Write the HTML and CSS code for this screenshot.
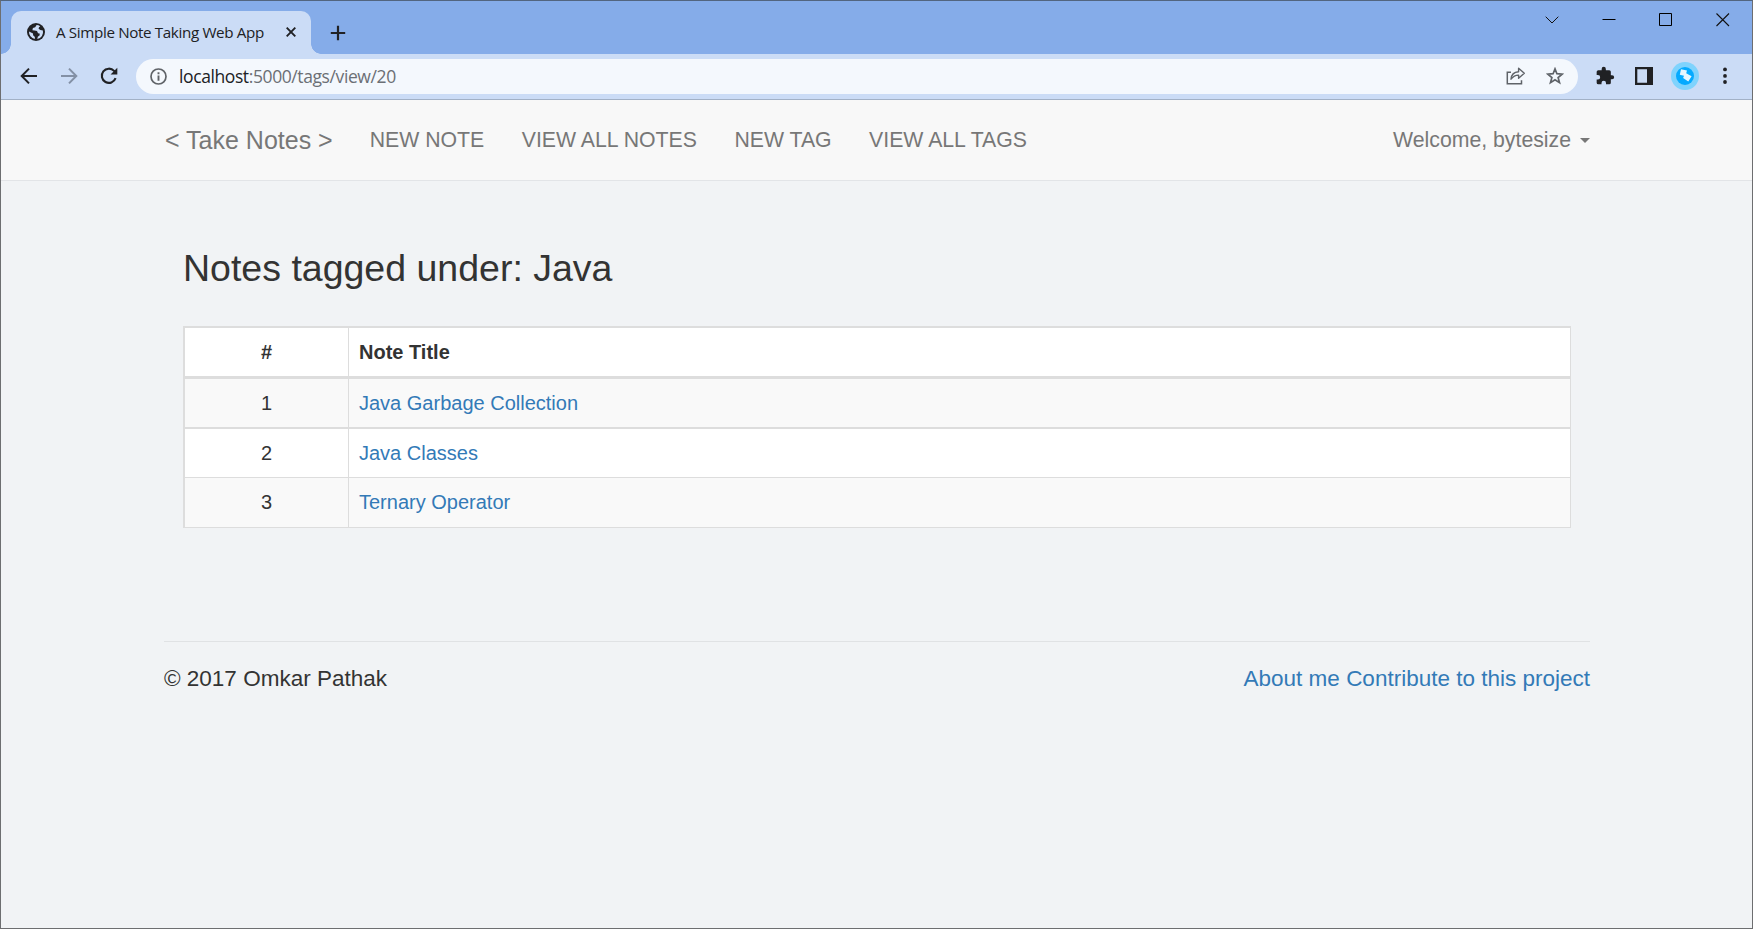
FILE: index.html
```html
<!DOCTYPE html>
<html lang="en">
<head>
<meta charset="utf-8">
<title>A Simple Note Taking Web App</title>
<link rel="stylesheet" href="styles.css">
</head>
<body>
<div class="window">
  <header class="titlebar">
    <div class="tab">
      <svg class="favicon" width="18" height="18" viewBox="0 0 18 18"><circle cx="9" cy="9" r="9" fill="#202124"/><path d="M9.6 2.1 8.2 4.2 5.9 5 5.4 7.2 7.6 7.6 10 8l1 2.2 1.600.4.1 1.600L10.800 13.800 10.300 16A7.100 7.100 0 0 0 15.900 7.400L13.400 7 11.600 5.800 12 4.200 13.200 3.300A7 7 0 0 0 9.600 2.100ZM2 8.500A7 7 0 0 0 7.800 15.900L7.900 13.900 6.100 12.300 6 10.600Z" fill="#cbdcf6"/></svg>
      <span class="tab-title">A Simple Note Taking Web App</span>
      <svg class="tab-close" width="10" height="10" viewBox="0 0 10 10"><path d="M.7.700 9.300 9.300M9.300.700.700 9.300" stroke="#202124" stroke-width="1.900"/></svg>
    </div>
    <svg class="new-tab" width="16" height="16" viewBox="0 0 16 16"><path d="M8 .800V15.200M.800 8H15.200" stroke="#202124" stroke-width="2.200"/></svg>
    <div class="window-controls">
      <svg width="14" height="14" viewBox="0 0 14 14"><path d="M.700 3.700 7 10 13.300 3.700" fill="none" stroke="#111" stroke-width="1"/></svg>
      <svg width="14" height="14" viewBox="0 0 14 14"><path d="M.500 6.500H13.500" stroke="#000"/></svg>
      <svg width="14" height="14" viewBox="0 0 14 14"><path d="M.500.500H12.500V12.500H.500Z" fill="none" stroke="#000"/></svg>
      <svg width="14" height="14" viewBox="0 0 14 14"><path d="M.500.500 13 13M13 .500.500 13" stroke="#111" stroke-width="1.100"/></svg>
    </div>
  </header>
  <div class="toolbar">
    <div class="nav-icons">
      <svg width="18" height="18" viewBox="0 0 18 18"><path d="M17 9H2M9 1.600 1.700 9 9 16.400" fill="none" stroke="#202124" stroke-width="2"/></svg>
      <svg width="18" height="18" viewBox="0 0 18 18"><path d="M1 9H16M9 1.600 16.300 9 9 16.400" fill="none" stroke="#8390a5" stroke-width="2"/></svg>
      <svg width="18" height="18" viewBox="0 0 18 18"><path d="M15.600 11.200A7.100 7.100 0 1 1 14.100 3.900L15 4.900" fill="none" stroke="#202124" stroke-width="2.100"/><path d="M17.300.800V7.500H10.600Z" fill="#202124"/></svg>
    </div>
    <div class="omnibox">
      <svg width="17" height="17" viewBox="0 0 17 17"><circle cx="8.500" cy="8.500" r="7.500" fill="none" stroke="#5f6368" stroke-width="1.700"/><path d="M8.500 7.500V12.700M8.500 4.300V6.200" stroke="#5f6368" stroke-width="1.900"/></svg>
      <span class="url">localhost<span class="path">:5000/tags/view/20</span></span>
      <svg class="share" width="20" height="20" viewBox="0 0 20 20"><path d="M5 6.200H1.300V17.700H15.500V14.300" fill="none" stroke="#5f6368" stroke-width="1.500"/><path d="M5 13.200C5.300 8.700 8 6 12.600 5.700V2.300L18.300 7.300 12.600 12.300V9.100C9.300 9 7.200 10.200 5 13.200Z" fill="none" stroke="#5f6368" stroke-width="1.400" stroke-linejoin="round"/></svg>
      <svg class="star" width="18" height="18" viewBox="0 0 18 18"><path d="M9 1.900 10.900 6.700 16.200 7.100 12.100 10.500 13.500 15.600 9 12.800 4.500 15.600 5.900 10.500 1.800 7.100 7.100 6.700Z" fill="none" stroke="#5f6368" stroke-width="1.700"/></svg>
    </div>
    <div class="actions">
      <svg width="20" height="20" viewBox="0 0 24 24"><path d="M20.500 11H19V7a2 2 0 0 0-2-2h-4V3.500a2.500 2.500 0 0 0-5 0V5H4a2 2 0 0 0-2 2v3.800h1.500a2.700 2.700 0 0 1 0 5.400H2V20a2 2 0 0 0 2 2h3.800v-1.500a2.700 2.700 0 0 1 5.400 0V22H17a2 2 0 0 0 2-2v-4h1.500a2.500 2.500 0 0 0 0-5Z" fill="#202124"/></svg>
      <svg class="panel-icon" width="18" height="18" viewBox="0 0 18 18"><path d="M0 0H18V18H0ZM2.300 2.300V15.700H12V2.300Z" fill="#202124" fill-rule="evenodd"/></svg>
      <svg class="profile" width="28" height="28" viewBox="0 0 28 28"><circle cx="14" cy="14" r="14" fill="#7fd3fd"/><circle cx="14" cy="14" r="9" fill="#05aaff"/><path d="M10 7.300 16 8.600 15.200 11.300 20.600 14.300 17.300 19.500 12.100 16 13 13.800 8.800 12.800Z" fill="#e6f6ff"/></svg>
      <svg class="dots" width="4" height="18" viewBox="0 0 4 18"><circle cx="2" cy="2.400" r="1.900" fill="#202124"/><circle cx="2" cy="8.900" r="1.900" fill="#202124"/><circle cx="2" cy="15" r="1.900" fill="#202124"/></svg>
    </div>
  </div>
  <nav class="navbar">
    <a class="brand">&lt; Take Notes &gt;</a>
    <a class="nav-link">NEW NOTE</a>
    <a class="nav-link">VIEW ALL NOTES</a>
    <a class="nav-link">NEW TAG</a>
    <a class="nav-link">VIEW ALL TAGS</a>
    <a class="nav-link user">Welcome, bytesize<span class="caret"></span></a>
  </nav>
  <main class="content">
    <h2 class="heading">Notes tagged under: Java</h2>
    <div class="notes">
      <div class="row head"><div class="num">#</div><div class="title">Note Title</div></div>
      <div class="row odd"><div class="num">1</div><div class="title"><a>Java Garbage Collection</a></div></div>
      <div class="row"><div class="num">2</div><div class="title"><a>Java Classes</a></div></div>
      <div class="row odd last"><div class="num">3</div><div class="title"><a>Ternary Operator</a></div></div>
    </div>
  </main>
  <footer class="footer">
    <span>© 2017 Omkar Pathak</span>
    <span class="links"><a>About me</a> <a>Contribute to this project</a></span>
  </footer>
</div>
</body>
</html>
```
FILE: styles.css
```css
* { box-sizing: border-box; }
body { margin: 0; font-family: "Liberation Sans", Arial, sans-serif; color: #333; }
svg { display: block; flex: none; }
.window { height: 929px; border: 1px solid #6d6e70; border-top-color: #52657f; background: #f1f3f5; overflow: hidden; }

.titlebar { height: 53px; background: #85ace9; display: flex; align-items: flex-end; padding-left: 10px; }
.tab { position: relative; width: 300px; height: 43px; background: #cbdcf6; border-radius: 10px 10px 0 0; display: flex; align-items: center; padding: 0 15px 1px 16px; }
.tab::before, .tab::after { content: ""; position: absolute; bottom: 0; width: 10px; height: 10px; }
.tab::before { left: -10px; background: radial-gradient(circle at 0 0, transparent 9.500px, #cbdcf6 10px); }
.tab::after { right: -10px; background: radial-gradient(circle at 100% 0, transparent 9.500px, #cbdcf6 10px); }
.tab-title { margin-left: 11px; font: 15.200px/20px "Open Sans", "Noto Sans", sans-serif; letter-spacing: -0.360px; color: #202124; white-space: nowrap; }
.tab-close { margin-left: auto; }
.new-tab { margin: 0 0 13px 19px; }
.window-controls { margin-left: auto; align-self: flex-start; display: flex; gap: 43px; padding: 12px 22px 0 0; }

.toolbar { height: 46px; background: #cbdcf6; border-bottom: 1px solid #a2b1c6; display: flex; align-items: center; padding: 0 0 1px 19px; }
.nav-icons { display: flex; gap: 22px; width: 116px; }
.omnibox { width: 1442px; height: 35px; border-radius: 18px; background: #f4f8fd; display: flex; align-items: center; padding: 0 14px; }
.url { margin-left: 12px; font: 17.500px/24px "Open Sans", "Noto Sans", sans-serif; letter-spacing: -0.400px; color: #202124; }
.path { color: #6b6f75; }
.share { margin-left: auto; }
.star { margin-left: 20px; }
.actions { display: flex; align-items: center; padding-left: 17px; }
.panel-icon { margin-left: 20px; }
.profile { margin-left: 18px; }
.dots { margin-left: 24px; }

.navbar { height: 81px; background: #f8f8f8; border-bottom: 1px solid #e2e4e7; display: flex; align-items: center; padding: 0 162px 0 164px; color: #777; white-space: nowrap; }
.brand { font-size: 25px; line-height: 30px; margin-right: 37px; }
.nav-link { font-size: 21.250px; line-height: 30px; margin-right: 37.500px; }
.user { margin: 0 0 0 auto; display: flex; align-items: center; }
.caret { margin-left: 9px; border: 5px solid transparent; border-top-color: #777; border-bottom: 0; }

.content { padding: 64px 182px 0; height: 460px; }
.heading { margin: 0; font-size: 37.500px; font-weight: 400; line-height: 46px; }
.notes { margin-top: 35px; width: 1388px; border: 2px solid #ddd; border-right-width: 1px; border-bottom-width: 1px; font-size: 20px; }
.row { display: grid; grid-template-columns: 164px 1fr; height: 49px; line-height: 49px; background: #fff; border-bottom: 1px solid #ddd; }
.row.head { height: 51px; border-bottom-width: 3px; font-weight: 700; }
.row.odd { height: 50px; border-bottom-width: 2px; background: #f9f9f9; }
.row.last { height: 49px; border-bottom: 0; }
.num { text-align: center; border-right: 1px solid #ddd; }
.title { padding-left: 10px; }
a { text-decoration: none; }
.title a, .links a { color: #337ab7; }

.footer { margin: 0 162px 0 163px; border-top: 1px solid #e0e2e4; padding-top: 21px; display: flex; justify-content: space-between; font-size: 22.500px; line-height: 31px; }
```
